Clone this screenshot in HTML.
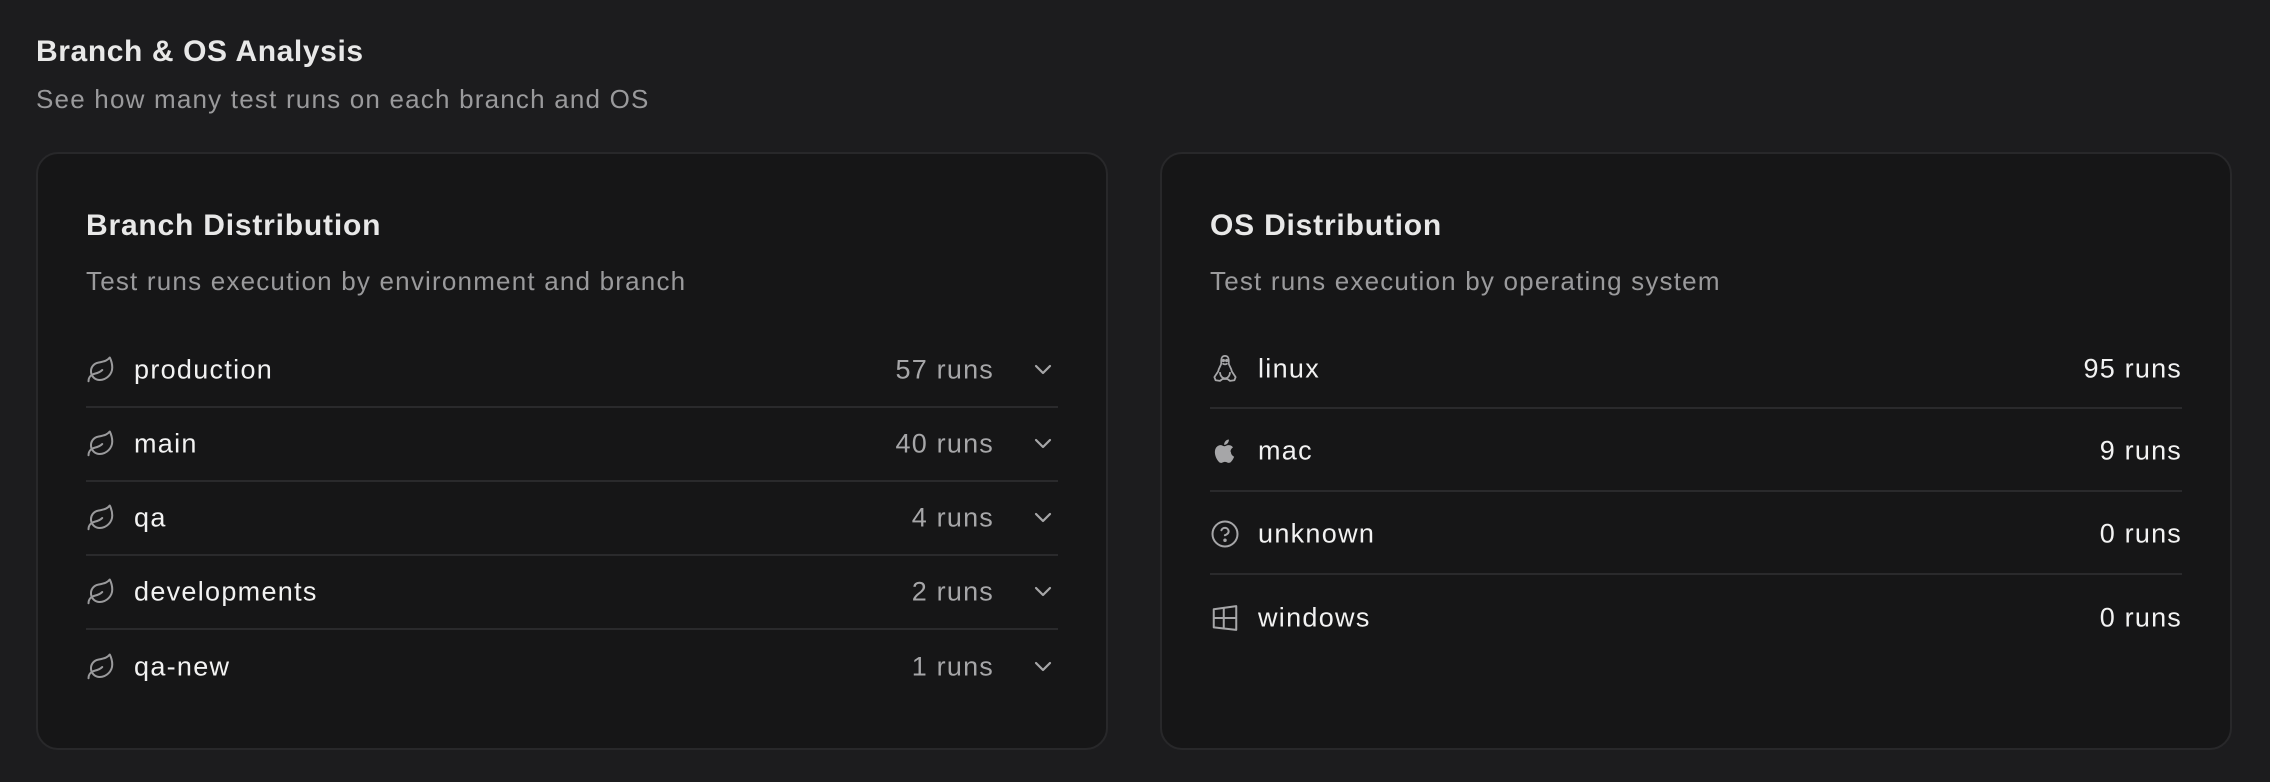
<!DOCTYPE html>
<html><head><meta charset="utf-8"><style>
*{margin:0;padding:0;box-sizing:border-box}
body{width:2270px;height:782px;background:#1c1c1e;font-family:"Liberation Sans",sans-serif;position:relative;overflow:hidden;color:#ededed}
h1{position:absolute;left:36px;top:35px;font-size:30px;font-weight:bold;color:#e8e8e8;letter-spacing:0.6px}
.sub{position:absolute;left:36px;top:84px;font-size:26px;color:#9a9a9c;letter-spacing:1.2px}
.card{position:absolute;top:152px;width:1072px;height:598px;background:#161617;border:2px solid #28282a;border-radius:22px}
.ct{position:absolute;left:48px;top:55px;font-size:30px;font-weight:bold;color:#e8e8e8;letter-spacing:0.8px}
.cd{position:absolute;left:48px;top:112px;font-size:26px;color:#9a9a9c;letter-spacing:1.2px}
.row{position:absolute;left:48px;right:48px;height:74px;border-bottom:2px solid #2a2a2c}
.row.last{border-bottom:none}
.row .ic{position:absolute;left:0;top:50%;transform:translateY(-50%);width:30px;height:30px}
.row .nm{position:absolute;left:48px;top:50%;transform:translateY(-50%);font-size:27px;color:#f2f2f2;letter-spacing:1.3px}
.row .rn{position:absolute;top:50%;transform:translateY(-50%);font-size:27px;letter-spacing:1.2px}
.row .ch{position:absolute;right:4px;top:50%;transform:translateY(-50%);width:22px;height:14px}
</style></head><body>
<h1>Branch &amp; OS Analysis</h1>
<div class="sub">See how many test runs on each branch and OS</div>

<div class="card" style="left:36px">
<div class="ct">Branch Distribution</div>
<div class="cd">Test runs execution by environment and branch</div>
<div class="row" style="top:180px"><svg class="ic" viewBox="0 0 24 24" fill="none" stroke="#9a9a9c" stroke-width="1.6" stroke-linecap="round" stroke-linejoin="round"><path d="M11 20A7 7 0 0 1 9.8 6.1C15.5 5 17 4.5 19 2c1 2 2 4.2 2 8 0 5.5-4.8 10-10 10Z"/><path d="M2 21c0-3 1.9-5.4 5.2-6.1C9.5 14.4 12 13 13 12"/></svg><div class="nm">production</div><div class="rn" style="right:64px;color:#a6a6a8">57 runs</div><svg class="ch" viewBox="0 0 22 14" fill="none" stroke="#a6a6a8" stroke-width="2.2" stroke-linecap="round" stroke-linejoin="round"><path d="M4 3l7 7 7-7"/></svg></div>
<div class="row" style="top:254px"><svg class="ic" viewBox="0 0 24 24" fill="none" stroke="#9a9a9c" stroke-width="1.6" stroke-linecap="round" stroke-linejoin="round"><path d="M11 20A7 7 0 0 1 9.8 6.1C15.5 5 17 4.5 19 2c1 2 2 4.2 2 8 0 5.5-4.8 10-10 10Z"/><path d="M2 21c0-3 1.9-5.4 5.2-6.1C9.5 14.4 12 13 13 12"/></svg><div class="nm">main</div><div class="rn" style="right:64px;color:#a6a6a8">40 runs</div><svg class="ch" viewBox="0 0 22 14" fill="none" stroke="#a6a6a8" stroke-width="2.2" stroke-linecap="round" stroke-linejoin="round"><path d="M4 3l7 7 7-7"/></svg></div>
<div class="row" style="top:328px"><svg class="ic" viewBox="0 0 24 24" fill="none" stroke="#9a9a9c" stroke-width="1.6" stroke-linecap="round" stroke-linejoin="round"><path d="M11 20A7 7 0 0 1 9.8 6.1C15.5 5 17 4.5 19 2c1 2 2 4.2 2 8 0 5.5-4.8 10-10 10Z"/><path d="M2 21c0-3 1.9-5.4 5.2-6.1C9.5 14.4 12 13 13 12"/></svg><div class="nm">qa</div><div class="rn" style="right:64px;color:#a6a6a8">4 runs</div><svg class="ch" viewBox="0 0 22 14" fill="none" stroke="#a6a6a8" stroke-width="2.2" stroke-linecap="round" stroke-linejoin="round"><path d="M4 3l7 7 7-7"/></svg></div>
<div class="row" style="top:402px"><svg class="ic" viewBox="0 0 24 24" fill="none" stroke="#9a9a9c" stroke-width="1.6" stroke-linecap="round" stroke-linejoin="round"><path d="M11 20A7 7 0 0 1 9.8 6.1C15.5 5 17 4.5 19 2c1 2 2 4.2 2 8 0 5.5-4.8 10-10 10Z"/><path d="M2 21c0-3 1.9-5.4 5.2-6.1C9.5 14.4 12 13 13 12"/></svg><div class="nm">developments</div><div class="rn" style="right:64px;color:#a6a6a8">2 runs</div><svg class="ch" viewBox="0 0 22 14" fill="none" stroke="#a6a6a8" stroke-width="2.2" stroke-linecap="round" stroke-linejoin="round"><path d="M4 3l7 7 7-7"/></svg></div>
<div class="row last" style="top:476px"><svg class="ic" viewBox="0 0 24 24" fill="none" stroke="#9a9a9c" stroke-width="1.6" stroke-linecap="round" stroke-linejoin="round"><path d="M11 20A7 7 0 0 1 9.8 6.1C15.5 5 17 4.5 19 2c1 2 2 4.2 2 8 0 5.5-4.8 10-10 10Z"/><path d="M2 21c0-3 1.9-5.4 5.2-6.1C9.5 14.4 12 13 13 12"/></svg><div class="nm">qa-new</div><div class="rn" style="right:64px;color:#a6a6a8">1 runs</div><svg class="ch" viewBox="0 0 22 14" fill="none" stroke="#a6a6a8" stroke-width="2.2" stroke-linecap="round" stroke-linejoin="round"><path d="M4 3l7 7 7-7"/></svg></div>
</div>

<div class="card" style="left:1160px">
<div class="ct">OS Distribution</div>
<div class="cd">Test runs execution by operating system</div>
<div class="row" style="top:176px;height:79px"><svg class="ic" viewBox="0 0 24 24" fill="none" stroke="#a6a6a8" stroke-width="1.4" stroke-linejoin="round"><path d="M12 1.5c-2 0-3 1.6-3 3.5v2.5C9 9 7 11 6.5 14L3.5 18.5 4.5 21l3.5.5 2-1.5h4l2 1.5 3.5-.5 1-2.5L17.5 14C17 11 15 9 15 7.5V5c0-1.9-1-3.5-3-3.5Z"/><path d="M10 7.5c1 1 3 1 4 0M8 14.5c0 3 2 5 4 5s4-2 4-5"/><circle cx="10.7" cy="5.2" r=".6" fill="#a6a6a8"/><circle cx="13.3" cy="5.2" r=".6" fill="#a6a6a8"/></svg><div class="nm">linux</div><div class="rn" style="right:0;color:#f2f2f2">95 runs</div></div>
<div class="row" style="top:257px;height:81px"><svg class="ic" viewBox="0 0 24 24" fill="#a6a6a8"><path d="M16.4 12.6c0-2.3 1.9-3.4 2-3.5-1.1-1.6-2.8-1.8-3.4-1.8-1.4-.1-2.8.9-3.5.9-.7 0-1.8-.9-3-.9C7 7.3 5.5 8.2 4.7 9.6c-1.7 2.9-.4 7.2 1.2 9.6.8 1.1 1.7 2.4 3 2.3 1.2 0 1.6-.8 3.1-.8 1.4 0 1.8.8 3.1.8 1.3 0 2.1-1.2 2.9-2.3.9-1.3 1.3-2.6 1.3-2.7-.1 0-2.6-1-2.6-3.9ZM14.1 5.8c.7-.8 1.1-1.9 1-3-1 0-2.1.6-2.8 1.4-.6.7-1.1 1.8-1 2.9 1.1.1 2.1-.5 2.8-1.3Z"/></svg><div class="nm">mac</div><div class="rn" style="right:0;color:#f2f2f2">9 runs</div></div>
<div class="row" style="top:340px;height:81px"><svg class="ic" viewBox="0 0 24 24" fill="none" stroke="#a6a6a8" stroke-width="1.6" stroke-linecap="round"><circle cx="12" cy="12" r="10"/><path d="M9.1 9a3 3 0 0 1 5.8 1c0 2-3 3-3 3"/><circle cx="12" cy="17" r=".6" fill="#a6a6a8"/></svg><div class="nm">unknown</div><div class="rn" style="right:0;color:#f2f2f2">0 runs</div></div>
<div class="row last" style="top:423px;height:81px"><svg class="ic" viewBox="0 0 24 24" fill="none" stroke="#a6a6a8" stroke-width="1.6" stroke-linejoin="round"><path d="M3 5l18-2.5v19L3 19.5Z"/><path d="M3 12h18M11 4v17"/></svg><div class="nm">windows</div><div class="rn" style="right:0;color:#f2f2f2">0 runs</div></div>
</div>
</body></html>
